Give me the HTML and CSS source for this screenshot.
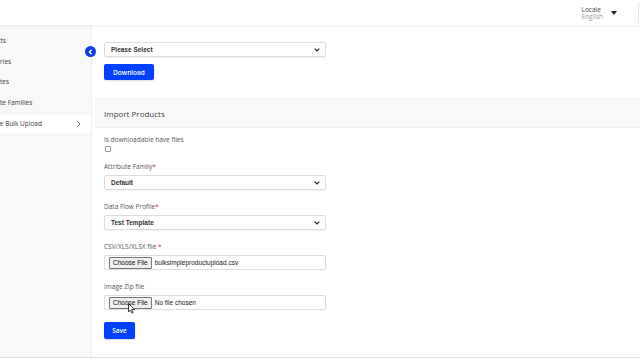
FILE: index.html
```html
<!DOCTYPE html>
<html lang="en">
<head>
    <meta charset="UTF-8">
    <meta name="viewport" content="width=device-width, initial-scale=1.0">
    <title>Simple Bulk Upload</title>
    <link rel="stylesheet" href="styles.css">
</head>
<body>
    <header class="topbar">
        <div class="locale">
            <span class="locale-label">Locale</span>
            <span class="locale-value">English</span>
        </div>
        <span class="caret"></span>
        <div class="avatar"></div>
    </header>
    <div class="main">
        <aside class="sidebar">
            <ul class="nav">
                <li>Products</li>
                <li>Categories</li>
                <li>Attributes</li>
                <li>Attribute Families</li>
                <li class="active">Simple Bulk Upload
                    <svg class="nav-chevron" width="5" height="8" viewBox="0 0 5 8"><path d="M1 1l3 3-3 3" fill="none" stroke="#777" stroke-width="1"/></svg>
                </li>
            </ul>
        </aside>
        <button class="collapse" aria-label="Collapse">
            <svg width="5" height="6" viewBox="0 0 5 6"><path d="M3.6 0.8L1.4 3l2.2 2.2" fill="none" stroke="#fff" stroke-width="1.3"/></svg>
        </button>
        <section class="content">
            <div class="block">
                <div class="select">
                    <span>Please Select</span>
                    <svg width="6" height="4" viewBox="0 0 6 4"><path d="M0.7 0.7L3 3l2.3-2.3" fill="none" stroke="#222" stroke-width="1.2"/></svg>
                </div>
                <button class="btn">Download</button>
            </div>

            <div class="band">Import Products</div>

            <div class="block form">
                <div class="field">
                    <label>Is downloadable have files</label>
                    <span class="checkbox"></span>
                </div>
                <div class="field">
                    <label>Attribute Family<span class="req">*</span></label>
                    <div class="select">
                        <span>Default</span>
                        <svg width="6" height="4" viewBox="0 0 6 4"><path d="M0.7 0.7L3 3l2.3-2.3" fill="none" stroke="#222" stroke-width="1.2"/></svg>
                    </div>
                </div>
                <div class="field">
                    <label>Data Flow Profile<span class="req">*</span></label>
                    <div class="select">
                        <span>Test Template</span>
                        <svg width="6" height="4" viewBox="0 0 6 4"><path d="M0.7 0.7L3 3l2.3-2.3" fill="none" stroke="#222" stroke-width="1.2"/></svg>
                    </div>
                </div>
                <div class="field">
                    <label>CSV/XLS/XLSX file <span class="req">*</span></label>
                    <div class="file">
                        <span class="file-btn">Choose File</span>
                        <span class="file-name">bulksimpleproductupload.csv</span>
                    </div>
                </div>
                <div class="field">
                    <label>Image Zip file</label>
                    <div class="file">
                        <span class="file-btn">Choose File</span>
                        <span class="file-name">No file chosen</span>
                        <svg class="cursor" width="7" height="11" viewBox="0 0 7 11"><path d="M0.5 0.5v8.5l2-2 1.4 3.2 1.3-0.6-1.4-3.1h2.8z" fill="#fff" stroke="#111" stroke-width="0.8"/></svg>
                    </div>
                </div>
                <button class="btn save">Save</button>
            </div>
        </section>
    </div>
</body>
</html>
```

FILE: styles.css
```css
body {
    font-family: 'Open Sans', 'Liberation Sans', sans-serif;
    margin: 0;
    padding: 0;
    background: #fff;
    color: #444;
    width: 640px;
    height: 360px;
    overflow: hidden;
}
.topbar {
    height: 25px;
    background: #fff;
    display: flex;
    align-items: center;
    justify-content: flex-end;
    box-shadow: 0 1px 3px rgba(0, 0, 0, 0.08);
    position: relative;
    z-index: 2;
}
.locale {
    display: flex;
    flex-direction: column;
    font-size: 6.5px;
    line-height: 7.5px;
    margin-top: 1px;
}
.locale-label {
    color: #444;
}
.locale-value {
    color: #999;
}
.caret {
    width: 0;
    height: 0;
    border-left: 3px solid transparent;
    border-right: 3px solid transparent;
    border-top: 4px solid #222;
    margin-left: 8px;
    margin-right: 21px;
}
.avatar {
    width: 12px;
    height: 20px;
    border: 1px solid #e4e4e4;
    border-radius: 3px;
    margin-right: -12px;
}
.main {
    display: flex;
    height: 332px;
    border-bottom: 1px solid #ddd;
    position: relative;
}
.sidebar {
    width: 91px;
    background: #f8f8f8;
    border-right: 1px solid #eee;
    overflow: hidden;
    padding-top: 5px;
}
.nav {
    list-style: none;
    margin: 0 0 0 -21px;
    padding: 0;
    font-size: 6.5px;
    color: #3a3a3a;
}
.nav li {
    height: 20.7px;
    white-space: nowrap;
    display: flex;
    align-items: center;
    padding-right: 10px;
}
.nav li.active {
    background: #fff;
    height: 18px;
    margin-top: 2px;
    padding-left: 4px;
}
.nav-chevron {
    margin-left: auto;
}
.collapse {
    position: absolute;
    left: 85px;
    top: 21px;
    width: 11px;
    height: 11px;
    border-radius: 50%;
    border: none;
    padding: 0;
    background: #0b3fd8;
    display: flex;
    align-items: center;
    justify-content: center;
    z-index: 3;
}
.content {
    flex: 1;
    padding: 0 0 0 3px;
}
.block {
    padding: 17px 0 0 9px;
}
.select {
    width: 222px;
    height: 15px;
    box-sizing: border-box;
    border: 1px solid #dcdcdc;
    border-radius: 2px;
    box-shadow: 0 1px 2px rgba(0, 0, 0, 0.06);
    display: flex;
    align-items: center;
    justify-content: space-between;
    padding: 0 5px 0 6px;
    font-family: 'Liberation Sans', Arial, sans-serif;
    font-weight: bold;
    font-size: 6.5px;
    color: #333;
}
.btn {
    display: block;
    background: #0041ff;
    color: #fff;
    border: none;
    border-radius: 2px;
    font-family: 'Open Sans', sans-serif;
    font-weight: 600;
    font-size: 6.5px;
    height: 16px;
    width: 50px;
    padding: 0;
    margin-top: 7px;
    box-shadow: 0 1px 2px rgba(0, 0, 0, 0.15);
}
.band {
    margin-top: 18px;
    height: 28px;
    background: #f8f8f8;
    border-top: 1px solid #f0f0f0;
    border-bottom: 1px solid #eee;
    display: flex;
    align-items: center;
    padding-left: 9px;
    font-size: 8px;
    color: #444;
}
.form {
    padding-top: 7px;
}
.field {
    display: flex;
    flex-direction: column;
    align-items: flex-start;
    margin-bottom: 12px;
}
.field label {
    font-size: 6.5px;
    line-height: 9px;
    color: #555;
    margin-bottom: 4px;
}
.req {
    color: #e0282e;
}
.checkbox {
    width: 4px;
    height: 4px;
    border: 1px solid #999;
    border-radius: 1px;
    margin-top: -2px;
    margin-left: 1px;
}
.field:first-child {
    margin-bottom: 10px;
}
.file {
    width: 222px;
    height: 15px;
    box-sizing: border-box;
    border: 1px solid #dcdcdc;
    border-radius: 2px;
    display: flex;
    align-items: center;
    padding-left: 4px;
    font-family: 'Liberation Sans', Arial, sans-serif;
    font-size: 6.5px;
    color: #222;
    position: relative;
}
.file-btn {
    background: #efefef;
    border: 1px solid #767676;
    border-radius: 1px;
    padding: 0 3px;
    height: 10px;
    line-height: 10px;
    color: #111;
    margin-right: 3px;
}
.cursor {
    position: absolute;
    left: 23px;
    top: 7px;
}
.save {
    width: 31px;
    height: 17px;
    margin-top: 2px;
}
```
